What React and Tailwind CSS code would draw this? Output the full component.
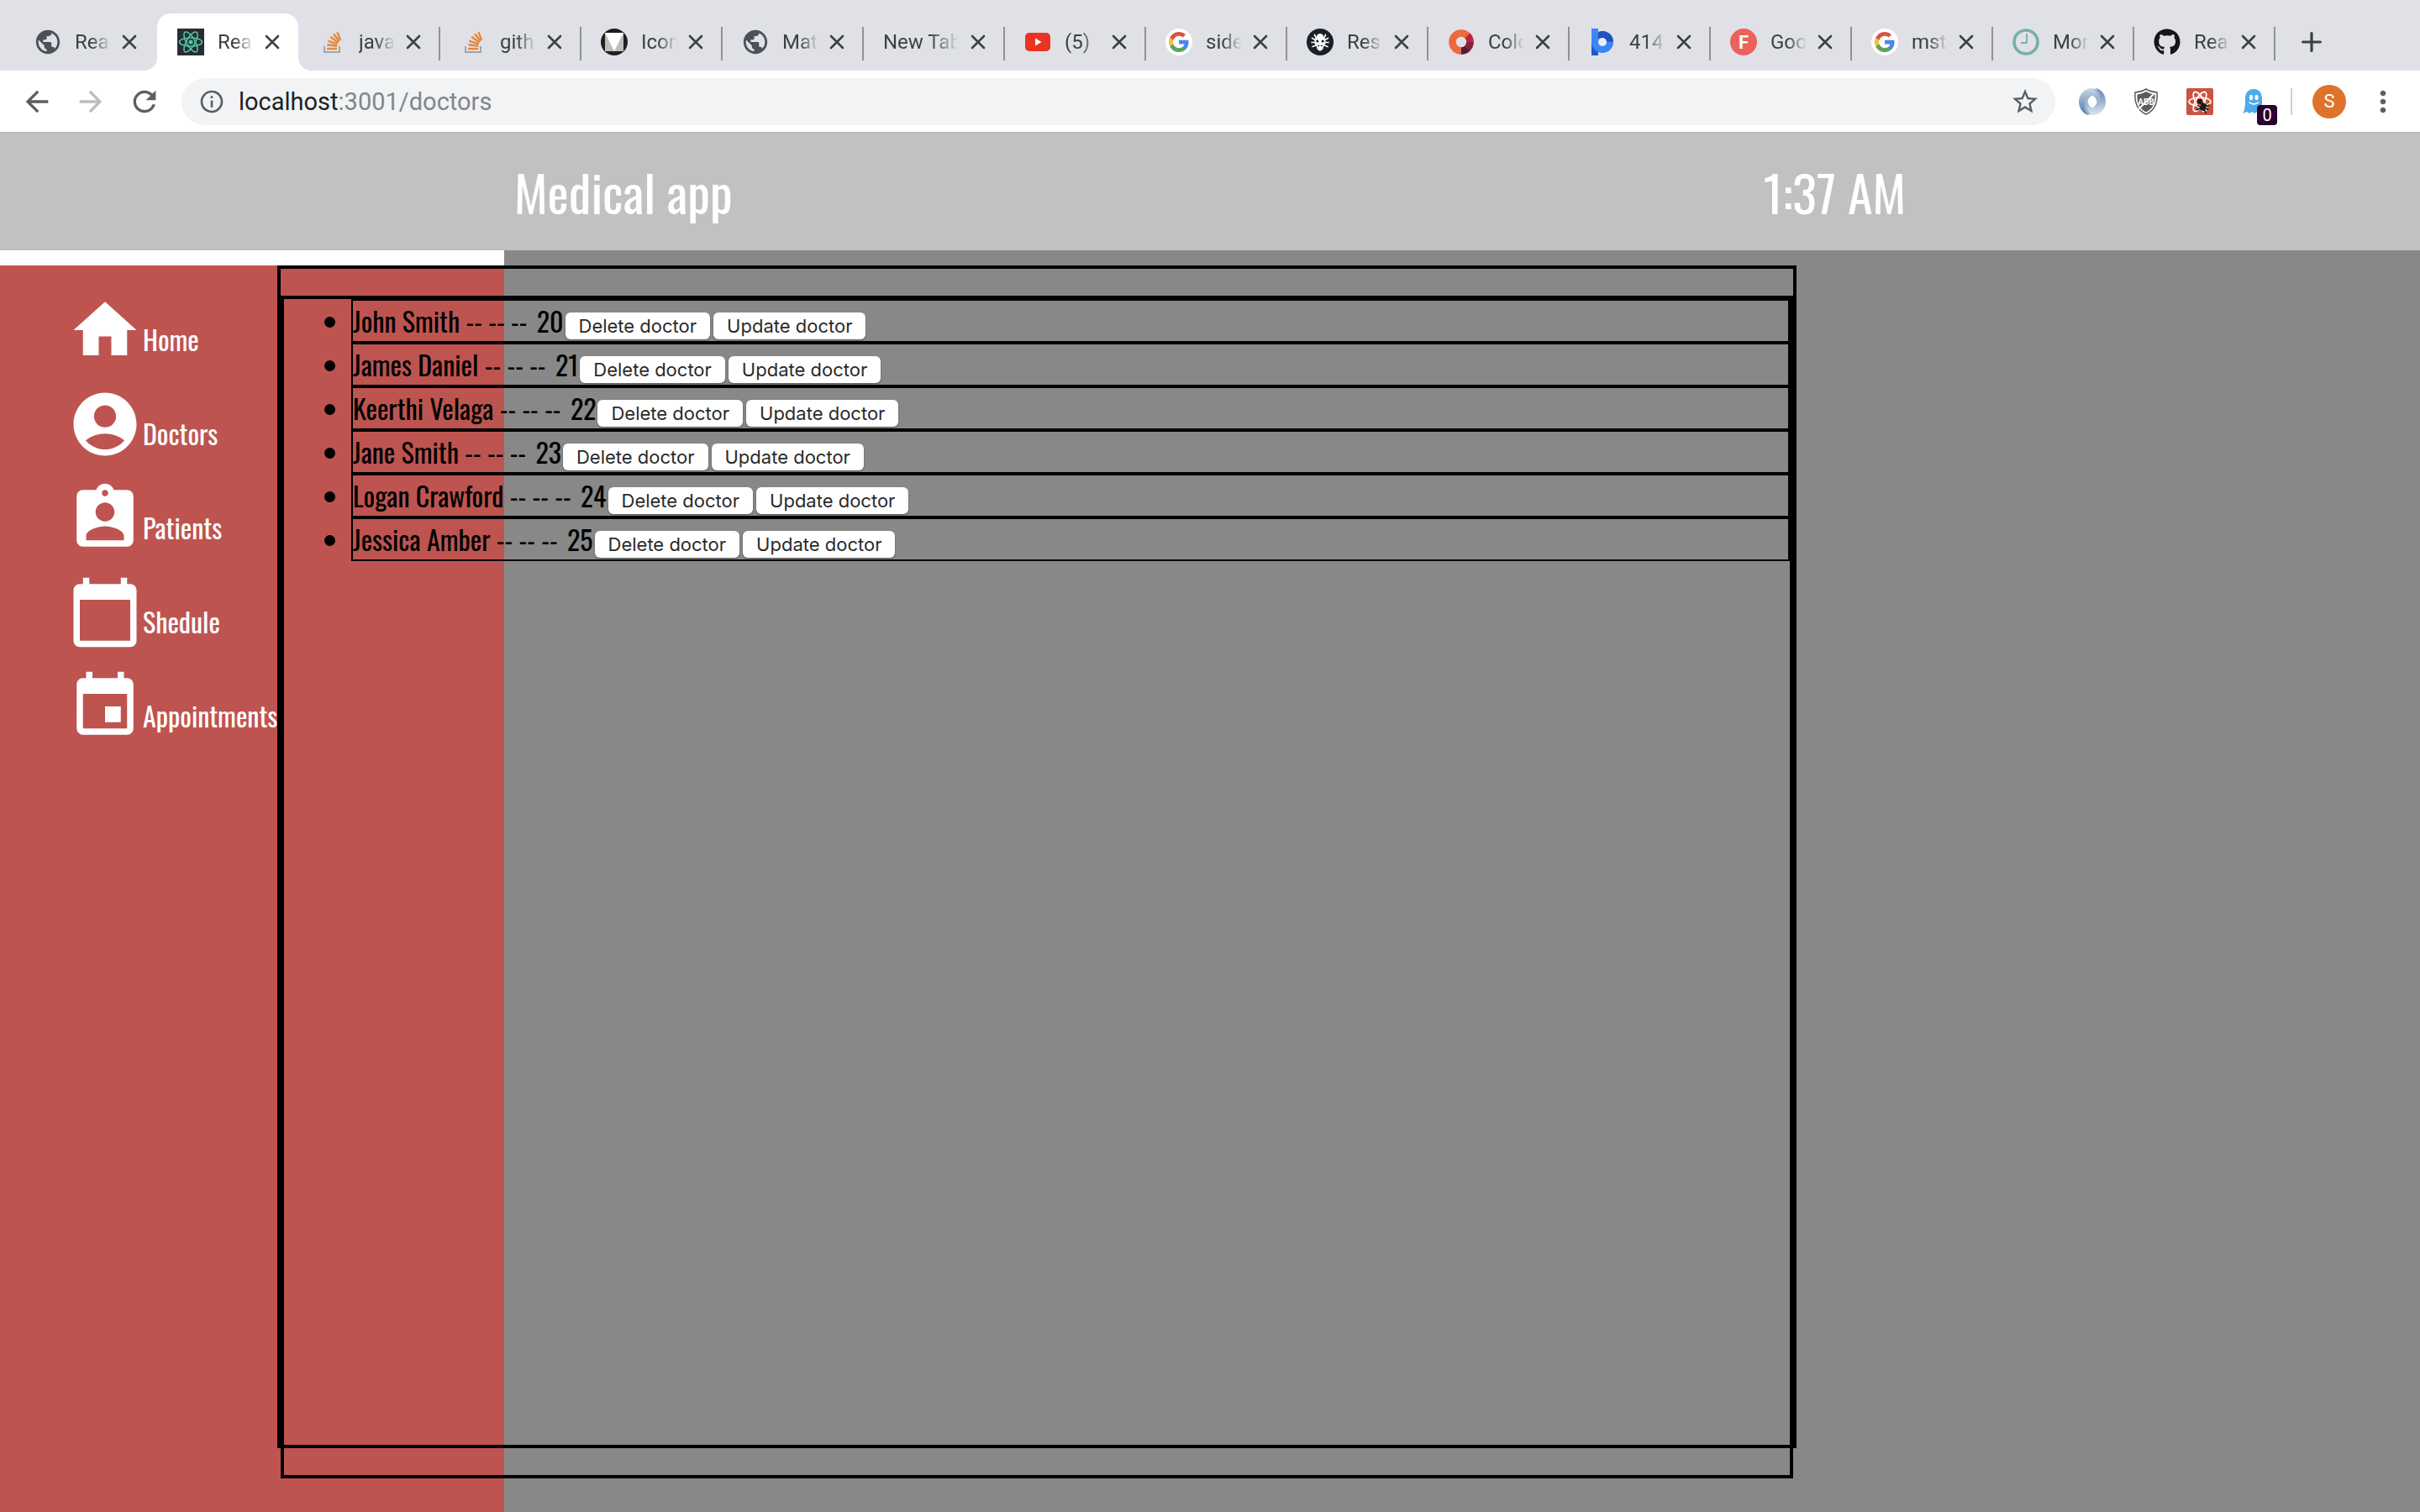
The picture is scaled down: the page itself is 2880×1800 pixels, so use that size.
import {
  MdAccountCircle,
  MdArrowBack,
  MdArrowForward,
  MdAssignmentInd,
  MdCalendarToday,
  MdEvent,
  MdHome,
  MdInfoOutline,
  MdMoreVert,
  MdPublic,
  MdRefresh,
  MdStarBorder,
} from "react-icons/md";
import { FaGithub } from "react-icons/fa";

function GlobeIcon() {
  return <MdPublic className="size-[34px] shrink-0 -mx-px text-[#4d5056]" />;
}

function ReactIcon() {
  return (
    <svg viewBox="0 0 32 32" className="size-8 shrink-0">
      <rect width="32" height="32" fill="#282c34" />
      <g fill="none" stroke="#4fc3a1" strokeWidth="1.6">
        <ellipse cx="16" cy="16" rx="13.5" ry="5" />
        <ellipse cx="16" cy="16" rx="13.5" ry="5" transform="rotate(60 16 16)" />
        <ellipse cx="16" cy="16" rx="13.5" ry="5" transform="rotate(120 16 16)" />
      </g>
      <circle cx="16" cy="16" r="2.6" fill="#4fc3a1" />
    </svg>
  );
}

function StackIcon() {
  return (
    <svg viewBox="0 0 32 32" className="size-8 shrink-0" fill="none">
      <path d="M7 21v7h18v-7" stroke="#9fa6ab" strokeWidth="2" />
      <g stroke="#e8873a" strokeWidth="2.4">
        <path d="M10 24h12" />
        <path d="M10.4 19.2l11.8 1.6" />
        <path d="M11.4 14.6l11.2 4" />
        <path d="M14.2 9.8l9.4 7" />
        <path d="M18 6.2l6.8 9" />
        <path d="M22.4 4.2l3.8 9.6" />
      </g>
    </svg>
  );
}

function TriangleIcon() {
  return (
    <svg viewBox="0 0 32 32" className="size-8 shrink-0">
      <circle cx="16" cy="16" r="16" fill="#1f1f1f" />
      <path d="M5 5h22v22H5z" fill="#bdbdbd" />
      <path d="M5 5h22L16 27z" fill="#fff" />
    </svg>
  );
}

function VideoIcon() {
  return (
    <svg viewBox="0 0 32 32" className="size-8 shrink-0">
      <rect x="1" y="5" width="30" height="22" rx="5" fill="#ea3323" />
      <path d="M13 11.500l7.500 4.500-7.500 4.500z" fill="#fff" />
    </svg>
  );
}

function GoogleIcon() {
  return (
    <svg viewBox="0 0 32 32" className="size-8 shrink-0">
      <circle cx="16" cy="16" r="16" fill="#fff" />
      <g transform="translate(4 4)">
        <path fill="#4e86ec" d="M23.520 12.270c0-.850-.080-1.670-.220-2.450H12v4.640h6.460a5.520 5.520 0 0 1-2.400 3.620v3.010h3.880c2.270-2.090 3.580-5.170 3.580-8.820z" />
        <path fill="#5aa55a" d="M12 24c3.240 0 5.960-1.070 7.940-2.910l-3.880-3.010c-1.070.720-2.450 1.150-4.060 1.150-3.120 0-5.770-2.110-6.710-4.950H1.280v3.110A12 12 0 0 0 12 24z" />
        <path fill="#f2bd42" d="M5.290 14.280A7.200 7.200 0 0 1 4.910 12c0-.790.140-1.560.380-2.280V6.610H1.280a12 12 0 0 0 0 10.780z" />
        <path fill="#d95140" d="M12 4.770c1.760 0 3.340.610 4.590 1.800l3.440-3.440A12 12 0 0 0 1.280 6.610l4.010 3.110C6.230 6.880 8.880 4.770 12 4.770z" />
      </g>
    </svg>
  );
}

function BugFaceIcon() {
  return (
    <svg viewBox="0 0 32 32" className="size-8 shrink-0">
      <circle cx="16" cy="16" r="16" fill="#1a202a" />
      <g stroke="#fff" strokeWidth="1.700" strokeLinecap="round" fill="none">
        <path d="M9.500 7.500l1.500 3 2 1M22.500 7.500l-1.500 3-2 1M6.500 11.500l4 2M25.500 11.500l-4 2M6 16.500h20M7 21.500l4-1.500M25 21.500l-4-1.500" />
      </g>
      <path d="M16 6c3 0 4 2.500 4 4 2 1.500 3 4 2.500 7S20 20 20 22s-1.500 4.500-4 4.500S12 24 12 22s-2-2-2.500-5S10 11.500 12 10c0-1.500 1-4 4-4z" fill="#fff" />
      <circle cx="12.800" cy="15" r="1.600" fill="#1a202a" />
      <circle cx="19.200" cy="15" r="1.600" fill="#1a202a" />
      <circle cx="14.200" cy="20.500" r="1" fill="#1a202a" />
      <circle cx="17.800" cy="20.500" r="1" fill="#1a202a" />
    </svg>
  );
}

function ColorRingIcon() {
  return (
    <svg viewBox="0 0 32 32" className="size-8 shrink-0" fill="none" strokeWidth="8.500">
      <circle cx="16" cy="16" r="10.500" stroke="#ee6840" />
      <path d="M23.420 8.580A10.500 10.500 0 0 1 26.500 16" stroke="#bb2440" />
      <path d="M26.500 16a10.500 10.500 0 0 1-3.080 7.420" stroke="#871f40" />
      <path d="M23.420 23.420A10.500 10.500 0 0 1 16 26.500" stroke="#541b40" />
    </svg>
  );
}

function BlueRingIcon() {
  return (
    <svg viewBox="0 0 32 32" className="size-8 shrink-0">
      <path d="M3 14h8v18H3z" fill="#2257c9" />
      <circle cx="16" cy="16" r="13" fill="#3b86f2" />
      <path d="M16 3a13 13 0 0 1 13 13l-9-1-9-4V4.500A13 13 0 0 1 16 3z" fill="#2350bd" />
      <path d="M3 0h8v16H3z" fill="#3b86f2" />
      <circle cx="16" cy="16" r="5" fill="#e9eefb" />
    </svg>
  );
}

function LetterIcon() {
  return (
    <span className="flex size-8 shrink-0 items-center justify-center rounded-full bg-[#eb625c] text-[22px] font-bold text-white">
      F
    </span>
  );
}

function ClockIcon() {
  return (
    <svg viewBox="0 0 32 32" className="size-8 shrink-0" fill="none" stroke="#76b0a6">
      <circle cx="16" cy="16" r="14" strokeWidth="3.600" />
      <path d="M17 6v11h-7" strokeWidth="1.800" />
    </svg>
  );
}

function OctocatIcon() {
  return <FaGithub className="size-8 shrink-0 text-[#161616]" />;
}

const tabs = [
  { title: "Rea", Icon: GlobeIcon },
  { title: "Rea", Icon: ReactIcon, active: true },
  { title: "java", Icon: StackIcon },
  { title: "gith", Icon: StackIcon, line: true },
  { title: "Icon", Icon: TriangleIcon, line: true },
  { title: "Mat", Icon: GlobeIcon, line: true },
  { title: "New Tab", line: true },
  { title: "(5)", Icon: VideoIcon, line: true },
  { title: "side", Icon: GoogleIcon, line: true },
  { title: "Res", Icon: BugFaceIcon, line: true },
  { title: "Colo", Icon: ColorRingIcon, line: true },
  { title: "414", Icon: BlueRingIcon, line: true },
  { title: "Goo", Icon: LetterIcon, line: true },
  { title: "mst", Icon: GoogleIcon, line: true },
  { title: "Mon", Icon: ClockIcon, line: true },
  { title: "Rea", Icon: OctocatIcon, line: true },
];

function Cross() {
  return (
    <svg viewBox="0 0 18 18" className="size-[18px]" stroke="#3d4043" strokeWidth="2.600" strokeLinecap="round">
      <path d="M2 2l14 14M16 2L2 16" />
    </svg>
  );
}

function Tab({ title, Icon, active, line }) {
  return (
    <div
      className={
        active
          ? "relative ml-0.5 flex h-[68px] w-[168px] shrink-0 items-center rounded-t-2xl bg-white pl-6 pr-[22px]"
          : "relative flex h-[68px] w-[168px] shrink-0 items-center pl-6 pr-[22px]"
      }
    >
      {line && <span className="absolute left-0 top-4 h-10 w-0.5 -translate-x-px bg-[#919295]" />}
      {active && (
        <>
          <span className="absolute -left-4 bottom-0 size-4 bg-[radial-gradient(circle_at_0_0,transparent_16px,white_16px)]" />
          <span className="absolute -right-4 bottom-0 size-4 bg-[radial-gradient(circle_at_100%_0,transparent_16px,white_16px)]" />
        </>
      )}
      {Icon && <Icon />}
      <span
        className={
          Icon
            ? "ml-4 min-w-0 flex-1 overflow-hidden whitespace-nowrap text-2xl text-[#3d4043] [mask-image:linear-gradient(to_right,black_45%,transparent_98%)]"
            : "min-w-0 flex-1 overflow-hidden whitespace-nowrap text-2xl text-[#3d4043] [mask-image:linear-gradient(to_right,black_60%,transparent_98%)]"
        }
      >
        {title}
      </span>
      <button type="button" aria-label={`Close ${title}`} className="ml-3">
        <Cross />
      </button>
    </div>
  );
}

function SwirlIcon() {
  return (
    <svg viewBox="0 0 32 32" className="size-8">
      <defs>
        <linearGradient id="swirl-a" x1="0" y1="0" x2="0" y2="1">
          <stop offset="0" stopColor="#c9d8e6" />
          <stop offset="1" stopColor="#4f76a6" />
        </linearGradient>
        <linearGradient id="swirl-b" x1="0" y1="0" x2="0" y2="1">
          <stop offset="0" stopColor="#5c82b0" />
          <stop offset="1" stopColor="#dbe6f0" />
        </linearGradient>
      </defs>
      <circle cx="16" cy="16" r="10.500" fill="none" stroke="#9db5d0" strokeWidth="10" />
      <path d="M16 0C7 0 0 7 0 16s6 15 12 16c-5-4-6-9-5-14 1-6 5-9 9-9 3 0 5 3 5 7 3-7 0-13-5-16z" fill="url(#swirl-a)" />
      <path d="M16 32c9 0 16-7 16-16S26 1 20 0c5 4 6 9 5 14-1 6-5 9-9 9-3 0-5-3-5-7-3 7 0 13 5 16z" fill="url(#swirl-b)" />
      <ellipse cx="16" cy="16" rx="4.500" ry="7" fill="#fff" />
    </svg>
  );
}

function ShieldIcon() {
  return (
    <svg viewBox="0 0 32 32" className="size-8">
      <path d="M16 1c4 2.500 8 3.500 13 4 1 12-2 21-13 26C5 26 2 17 3 5c5-.500 9-1.500 13-4z" fill="#fff" stroke="#55595c" strokeWidth="1.500" />
      <path d="M16 4c3.500 2 6.500 3 10.500 3.500C27 17 24.500 24 16 28.500 7.500 24 5 17 5.500 7.500 9.500 7 12.500 6 16 4z" fill="#5a5d5f" />
      <text x="16" y="20" textAnchor="middle" fontSize="10" fontWeight="700" fill="#fff">
        ADB
      </text>
      <path d="M7 25L25 7" stroke="#fff" strokeWidth="2" />
    </svg>
  );
}

function DevtoolsIcon() {
  return (
    <svg viewBox="0 0 32 32" className="size-8">
      <rect width="32" height="32" rx="2" fill="#c95440" />
      <g fill="none" stroke="#fff" strokeWidth="1.700">
        <ellipse cx="16" cy="16" rx="13" ry="5" />
        <ellipse cx="16" cy="16" rx="13" ry="5" transform="rotate(60 16 16)" />
        <ellipse cx="16" cy="16" rx="13" ry="5" transform="rotate(120 16 16)" />
      </g>
      <circle cx="16" cy="16" r="3" fill="#1c1c1c" />
      <g transform="rotate(20 20 22)">
        <rect x="16.500" y="17.500" width="7" height="9.500" rx="3" fill="#1c1c1c" />
        <path d="M13.500 17.500l4 3h5l4-3M13 23h14M14 28.500l3.500-3.500h5l3.500 3.500" fill="none" stroke="#1c1c1c" strokeWidth="1.700" />
      </g>
    </svg>
  );
}

function GhostIcon() {
  return (
    <svg viewBox="0 0 32 32" className="size-8">
      <path d="M16 1c6 0 10 4.500 10 11v17l-3 1-3-2-3 2-3-2-3 2-3-2-5 2c2.500-4 3-8 3-18C6 5.500 10 1 16 1z" fill="#4cabeb" />
      <ellipse cx="13" cy="11" rx="2" ry="3.300" fill="#fff" />
      <ellipse cx="19.500" cy="11" rx="2" ry="3.300" fill="#fff" />
      <path d="M11 17c2.500 2.500 8 2.500 10.500 0" fill="none" stroke="#fff" strokeWidth="1.600" strokeLinecap="round" />
    </svg>
  );
}

function BrowserChrome() {
  return (
    <div className="font-[Roboto,sans-serif]">
      <div className="flex items-end overflow-hidden bg-[#dfe1e6] pl-[17px] pt-4">
        {tabs.map((tab, i) => (
          <Tab key={i} {...tab} />
        ))}
        <div className="relative flex h-[68px] items-center pl-8">
          <span className="absolute left-0 top-4 h-10 w-0.5 -translate-x-px bg-[#919295]" />
          <button type="button" aria-label="New tab">
            <svg viewBox="0 0 24 24" className="size-6" stroke="#3d4043" strokeWidth="3.200" strokeLinecap="round">
              <path d="M12 1.600v20.800M1.600 12h20.800" />
            </svg>
          </button>
        </div>
      </div>
      <div className="flex h-[74px] items-center border-b border-[#b6b6b6] bg-white pr-6">
        <button type="button" aria-label="Back" className="ml-6">
          <MdArrowBack className="size-10 text-[#5b5e63]" />
        </button>
        <button type="button" aria-label="Forward" className="ml-6">
          <MdArrowForward className="size-10 text-[#bbbdbf]" />
        </button>
        <button type="button" aria-label="Reload" className="ml-6">
          <MdRefresh className="size-10 text-[#5b5e63]" />
        </button>
        <div className="ml-6 flex h-14 flex-1 items-center rounded-full bg-[#f1f3f4] pl-5 pr-[18px]">
          <MdInfoOutline className="size-8 text-[#5b5e63]" />
          <a href="#doctors" className="ml-4 flex-1 text-[29px] leading-8 text-[#80868b]">
            <span className="text-[#202124]">localhost</span>:3001/doctors
          </a>
          <button type="button" aria-label="Bookmark this page">
            <MdStarBorder className="size-9 text-[#5b5e63]" />
          </button>
        </div>
        <div className="ml-7 flex items-center gap-8">
          <SwirlIcon />
          <ShieldIcon />
          <DevtoolsIcon />
          <div className="relative">
            <GhostIcon />
            <span className="absolute -bottom-3 left-5 flex size-6 items-center justify-center rounded bg-[#2b0230] text-xl text-white">
              0
            </span>
          </div>
        </div>
        <span className="ml-7 h-8 w-0.5 bg-[#cfd0d2]" />
        <button
          type="button"
          aria-label="Profile"
          className="ml-6 flex size-10 items-center justify-center rounded-full bg-[#df732b] text-[22px] text-white"
        >
          S
        </button>
        <button type="button" aria-label="Menu" className="ml-6">
          <MdMoreVert className="size-10 text-[#5b5e63]" />
        </button>
      </div>
    </div>
  );
}

const links = [
  { label: "Home", Icon: MdHome },
  { label: "Doctors", Icon: MdAccountCircle },
  { label: "Patients", Icon: MdAssignmentInd },
  { label: "Shedule", Icon: MdCalendarToday },
  { label: "Appointments", Icon: MdEvent },
];

const doctors = [
  { name: "John Smith", id: 20 },
  { name: "James Daniel", id: 21 },
  { name: "Keerthi Velaga", id: 22 },
  { name: "Jane Smith", id: 23 },
  { name: "Logan Crawford", id: 24 },
  { name: "Jessica Amber", id: 25 },
];

function RowButton({ children }) {
  return (
    <button
      type="button"
      className="mx-0.5 h-8 rounded-md bg-white px-4 font-[Inter,sans-serif] text-[22px] leading-8 text-[#2a2a2a] shadow-[0_1px_2px_rgba(0,0,0,0.4)]"
    >
      {children}
    </button>
  );
}

export default function App() {
  return (
    <div className="flex min-h-screen flex-col bg-[#888888]">
      <BrowserChrome />
      <div className="flex flex-1 flex-col font-[Oswald,sans-serif]">
        <header className="flex h-[140px] items-center justify-between bg-[#c1c1c1] px-[612px] text-6xl text-white">
          <h1>Medical app</h1>
          <time>1:37 AM</time>
        </header>
        <div className="flex flex-1">
          <aside className="flex w-[600px] shrink-0 flex-col bg-white pt-[18px]">
            <nav className="flex-1 bg-[#be5450] pl-20 pt-8">
              <ul>
                {links.map(({ label, Icon }) => (
                  <li key={label} className="h-28">
                    <a href={`#${label.toLowerCase()}`} className="flex items-end text-[32px] text-white">
                      <Icon className="size-[90px]" />
                      <span className="leading-[68px]">{label}</span>
                    </a>
                  </li>
                ))}
              </ul>
            </nav>
          </aside>
          <main className="-ml-[270px] mb-[76px] mt-[18px] box-content w-[62.5%] shrink-0 border-4 border-black">
            <div className="mt-8 h-[calc(100%+8px)] border-4 border-black">
              <ul className="list-disc pl-20 text-[32px] text-black">
                {doctors.map(({ name, id }) => (
                  <li key={id} className="h-[52px] border-2 border-black leading-[48px]">
                    {name} -- -- -- <span className="ml-1">{id}</span>
                    <RowButton>Delete doctor</RowButton>
                    <RowButton>Update doctor</RowButton>
                  </li>
                ))}
              </ul>
            </div>
          </main>
        </div>
      </div>
    </div>
  );
}
